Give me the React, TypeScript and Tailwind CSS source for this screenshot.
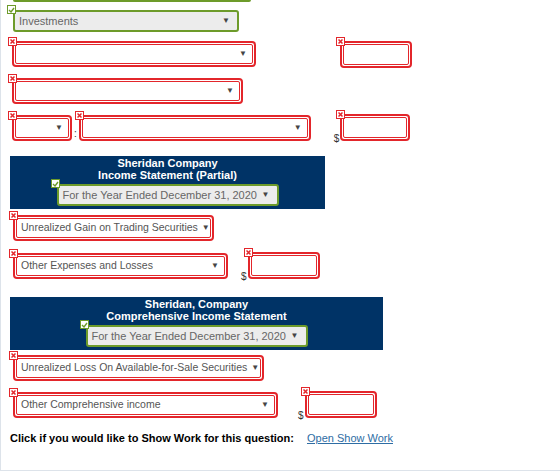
import React from 'react';

// status marker sitting on the top-left corner of each answer field
function Mark({ ok }: { ok?: boolean }) {
  if (ok) {
    return (
      <span className="absolute -left-[6px] -top-[5px] z-10 flex h-[9px] w-[9px] items-center justify-center border border-[#6d9b2a] bg-white">
        <svg width="7" height="6" viewBox="0 0 7 6">
          <polyline points="1,3 3,5 6,1" fill="none" stroke="#6d9b2a" strokeWidth="1.4" />
        </svg>
      </span>
    );
  }
  return (
    <span className="absolute -left-[4px] -top-[4px] z-10 flex h-[9px] w-[9px] items-center justify-center border border-[#e3262b] bg-white">
      <svg width="5" height="5" viewBox="0 0 5 5">
        <path d="M0.5 0.5 L4.5 4.5 M4.5 0.5 L0.5 4.5" stroke="#e3262b" strokeWidth="1.5" />
      </svg>
    </span>
  );
}

function Arrow() {
  return <span className="ml-[4px] shrink-0 text-[8px] leading-none text-[#444]">▼</span>;
}

// wrong answer: double red outline
function BadSelect({ w, text }: { w: string; text?: string }) {
  return (
    <div className={`relative ${w} shrink-0`}>
      <Mark />
      <div className="h-[26px] rounded-[4px] border-2 border-[#e3262b] bg-white p-px">
        <div className="flex h-full items-center justify-between overflow-hidden rounded-[2px] border border-[#e3262b] pl-[4px] pr-[5px] text-[10.5px] text-[#555]">
          <span className="whitespace-nowrap">{text}</span>
          <Arrow />
        </div>
      </div>
    </div>
  );
}

function BadInput({ w = 'w-[72px]' }: { w?: string }) {
  return (
    <div className={`relative ${w} shrink-0`}>
      <Mark />
      <div className="h-[27px] rounded-[4px] border-2 border-[#e3262b] bg-white p-px">
        <div className="h-full rounded-[2px] border border-[#e3262b]" />
      </div>
    </div>
  );
}

function GoodSelect({ w, text }: { w: string; text: string }) {
  return (
    <div className={`relative ${w} shrink-0`}>
      <Mark ok />
      <div className="flex h-[22px] items-center justify-between rounded-[3px] border-2 border-[#6d9b2a] bg-[#ececec] pl-[4px] pr-[7px] text-[11px] font-normal text-[#666]">
        <span className="whitespace-nowrap">{text}</span>
        <Arrow />
      </div>
    </div>
  );
}

function Dollar() {
  return <span className="mb-[-3px] mr-px text-[10px] leading-none text-[#333]">$</span>;
}

function Heading({ w, lines }: { w: string; lines: string[] }) {
  return (
    <div className={`${w} flex h-[53px] flex-col items-center bg-[#003366] pt-px text-[11px] font-bold leading-[12px] text-white`}>
      {lines.map((l) => (
        <div key={l}>{l}</div>
      ))}
      <div className="mt-[3px]">
        <GoodSelect w="w-[222px]" text="For the Year Ended December 31, 2020" />
      </div>
    </div>
  );
}

export default function App() {
  return (
    <div className="h-[473px] w-[560px] bg-white font-['Liberation_Sans',Arial,sans-serif]">
      <div className="h-[471px] border-b border-l border-[#dde3ea] pl-[9px]">
        <div className="ml-[3px] h-[2px] w-[238px] rounded-b-[2px] bg-[#6d9b2a]" />

        <div className="ml-[3px] mt-[8px]">
          <GoodSelect w="w-[226px]" text="Investments" />
        </div>

        <div className="mt-[9px] flex items-start pl-[2px]">
          <BadSelect w="w-[244px]" />
          <div className="ml-[84px]">
            <BadInput />
          </div>
        </div>

        <div className="mt-[10px] flex pl-[2px]">
          <BadSelect w="w-[231px]" />
        </div>

        <div className="mt-[10px] flex items-end pl-[2px]">
          <BadSelect w="w-[60px]" />
          <span className="mx-[2px] mb-[2px] text-[10px] leading-none text-[#333]">:</span>
          <BadSelect w="w-[232px]" />
          <div className="ml-[23px] flex items-end">
            <Dollar />
            <BadInput w="w-[70px]" />
          </div>
        </div>

        <div className="mt-[15px]">
          <Heading w="w-[315px]" lines={['Sheridan Company', 'Income Statement (Partial)']} />
        </div>

        <div className="mt-[6px] flex pl-[3px]">
          <BadSelect w="w-[201px]" text="Unrealized Gain on Trading Securities" />
        </div>

        <div className="mt-[11px] flex items-end pl-[3px]">
          <BadSelect w="w-[215px]" text="Other Expenses and Losses" />
          <div className="ml-[13px] flex items-end">
            <Dollar />
            <BadInput />
          </div>
        </div>

        <div className="mt-[18px]">
          <Heading w="w-[373px]" lines={['Sheridan, Company', 'Comprehensive Income Statement']} />
        </div>

        <div className="mt-[5px] flex pl-[3px]">
          <BadSelect w="w-[251px]" text="Unrealized Loss On Available-for-Sale Securities" />
        </div>

        <div className="mt-[10px] flex items-end pl-[3px]">
          <BadSelect w="w-[265px]" text="Other Comprehensive income" />
          <div className="ml-[20px] flex items-end">
            <Dollar />
            <BadInput />
          </div>
        </div>

        <div className="mt-[12px] flex items-center text-[11px]">
          <span className="font-bold text-black">Click if you would like to Show Work for this question:</span>
          <a href="#" className="ml-[13px] text-[#2e6da4] underline">
            Open Show Work
          </a>
        </div>
      </div>
    </div>
  );
}
